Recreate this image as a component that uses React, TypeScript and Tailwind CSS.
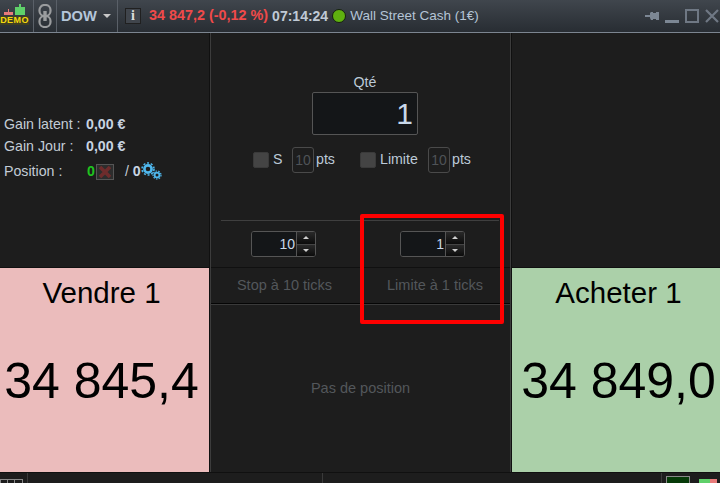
const font = "font-['Liberation_Sans',Arial,sans-serif]";

function Sep() {
  return <div className="h-full w-px bg-[#5a6068]" />;
}

function DemoIcon() {
  return (
    <div className="relative h-8 w-[33px] shrink-0">
      <svg width="33" height="32" viewBox="0 0 33 32" className="absolute left-0 top-0">
        <rect x="4" y="12" width="9" height="3" fill="#e87b7b" />
        <rect x="8" y="9" width="1" height="3" fill="#e87b7b" />
        <rect x="15" y="7" width="10" height="8" fill="#5fd06a" />
        <rect x="19" y="4" width="2" height="3" fill="#5fd06a" />
      </svg>
      <span className="absolute left-0 top-[16px] w-[29px] bg-[#3f3f25] text-center text-[9px] font-bold leading-[9px] tracking-[0.4px] text-[#f5d90a]">
        DEMO
      </span>
    </div>
  );
}

function ChainIcon() {
  return (
    <svg width="14" height="24" viewBox="0 0 14 24" fill="none" stroke="#9a9c9e" strokeWidth="2.2">
      <rect x="1.5" y="1" width="11" height="11" rx="5" />
      <rect x="1.5" y="12" width="11" height="11" rx="5" />
      <path d="M7 7v10" strokeWidth="3.4" />
    </svg>
  );
}

function WindowButtons() {
  return (
    <div className="ml-auto mr-[1px] flex items-center gap-[6px]">
      <svg width="14" height="12" viewBox="0 0 14 12" fill="#7c8794">
        <path d="M0 5h5V3l1-1h2v1h3V2h3v8h-3V9H8v1H6L5 8V7H0z" />
      </svg>
      <svg width="14" height="14" viewBox="0 0 14 14" fill="#7c8794">
        <rect x="0" y="11" width="14" height="3" />
      </svg>
      <svg width="14" height="14" viewBox="0 0 14 14" fill="none" stroke="#6f7884" strokeWidth="2">
        <rect x="1" y="1" width="12" height="12" />
      </svg>
      <svg width="14" height="14" viewBox="0 0 14 14" fill="none" stroke="#6f7884" strokeWidth="2.2">
        <path d="M1 1l12 12M13 1L1 13" />
      </svg>
    </div>
  );
}

function Header() {
  return (
    <div className="flex h-[33px] items-center border-b border-[#7c8590] bg-gradient-to-b from-[#40464d] to-[#282d33] text-[14px]">
      <DemoIcon />
      <Sep />
      <div className="flex w-[22px] justify-center">
        <ChainIcon />
      </div>
      <Sep />
      <span className="ml-[4px] text-[14.7px] font-bold text-[#b4c6da]">DOW</span>
      <span className="ml-[6px] h-0 w-0 border-x-[4px] border-t-[4px] border-x-transparent border-t-[#c8c8c8]" />
      <div className="ml-[6px] h-full w-px bg-[#5a6068]" />
      <span className="ml-[7px] flex h-[16px] w-[16px] items-center justify-center border border-[#202020] bg-[#40454c] font-['Liberation_Serif',serif] text-[14px] font-bold leading-none text-[#dddddd]">
        i
      </span>
      <span className="ml-[8px] text-[14.4px] font-bold text-[#f04a4a]">34 847,2 (-0,12 %)</span>
      <span className="ml-[4px] font-bold text-[#c0cad6]">07:14:24</span>
      <span className="ml-[4px] h-[14px] w-[14px] rounded-full border border-[#15200f] bg-[#5fb00f]" />
      <span className="ml-[4px] text-[13.5px] text-[#b4c4d6]">Wall Street Cash (1€)</span>
      <WindowButtons />
    </div>
  );
}

function LeftInfo() {
  return (
    <div className="flex h-[234px] flex-col bg-[#1d1d1d] pl-[4px] pt-[81px] text-[14.2px] text-[#c3ccd6]">
      <div className="flex h-[22px] items-center">
        <span className="w-[82px]">Gain latent :</span>
        <span className="font-bold text-[#c8d4e2]">0,00 €</span>
      </div>
      <div className="flex h-[22px] items-center">
        <span className="w-[82px]">Gain Jour :</span>
        <span className="font-bold text-[#c8d4e2]">0,00 €</span>
      </div>
      <div className="mt-[3px] flex h-[22px] items-center">
        <span className="w-[83px]">Position :</span>
        <span className="font-bold text-[#1fc41f]">0</span>
        <span className="ml-px flex h-[16px] w-[18px] items-center justify-center border border-[#555] bg-[#2d2d2d]">
          <svg width="12" height="12" viewBox="0 0 12 12" stroke="#6e2c2c" strokeWidth="3.6">
            <path d="M1 1l10 10M11 1L1 11" />
          </svg>
        </span>
        <span className="ml-[11px]">/</span>
        <span className="ml-[4px] font-bold text-[#c8d4e2]">0</span>
        <svg width="22" height="20" viewBox="0 0 22 20" fill="none" stroke="#4fb8ee" className="-mt-[1px]">
          <circle cx="7" cy="7" r="3.6" strokeWidth="2.6" />
          <circle cx="7" cy="7" r="6" strokeWidth="1.6" strokeDasharray="2 1.8" />
          <circle cx="16" cy="13" r="2.4" strokeWidth="1.8" />
          <circle cx="16" cy="13" r="4" strokeWidth="1.2" strokeDasharray="1.6 1.2" />
        </svg>
      </div>
    </div>
  );
}

function Checkbox() {
  return <span className="h-4 w-4 rounded-[2px] border border-[#3a3a3a] bg-[#444444]" />;
}

function PtsBox() {
  return (
    <span className="flex h-[26px] w-[22px] items-center justify-center rounded-[3px] border border-[#4a4a4a] text-[14px] text-[#4f5357]">
      10
    </span>
  );
}

function Spinner({ value }: { value: string }) {
  return (
    <div className="flex h-[26px] w-[65px] overflow-hidden rounded-[3px] border border-[#555555]">
      <div className="flex-1 bg-[#141618] pr-[1px] text-right text-[14px] leading-[24px] text-[#c8d8ea]">{value}</div>
      <div className="flex w-[19px] flex-col border-l border-[#555555] bg-[#101010]">
        <div className="flex flex-1 items-center justify-center border-b border-[#444444] bg-gradient-to-b from-[#2a2a2a] to-[#0c0c0c]">
          <span className="h-0 w-0 border-x-[3px] border-b-[3px] border-x-transparent border-b-[#d0d0d0]" />
        </div>
        <div className="flex flex-1 items-center justify-center bg-gradient-to-b from-[#2a2a2a] to-[#0c0c0c]">
          <span className="h-0 w-0 border-x-[3px] border-t-[3px] border-x-transparent border-t-[#d0d0d0]" />
        </div>
      </div>
    </div>
  );
}

function CenterTop() {
  return (
    <div className="flex h-[234px] flex-col bg-[#1d1d1d] text-[14.2px] text-[#bccad8]">
      <div className="ml-[101px] mt-[40px] w-[106px] text-center leading-[18px]">Qté</div>
      <div className="ml-[101px] mt-px h-[43px] w-[106px] rounded-[2px] border border-[#555555] bg-[#141618] pr-[4px] text-right text-[30px] leading-[41px] text-[#c8d8ea]">
        1
      </div>
      <div className="mt-[12px] flex items-center pl-[42px]">
        <Checkbox />
        <span className="ml-[4px] w-[19px]">S</span>
        <PtsBox />
        <span className="ml-[2px] w-[44px]">pts</span>
        <Checkbox />
        <span className="ml-[4px] w-[48px]">Limite</span>
        <PtsBox />
        <span className="ml-[2px]">pts</span>
      </div>
      <div className="ml-[10px] mr-[11px] mt-[47px] h-px bg-[#3f3f3f]" />
      <div className="mt-[10px] flex pl-[40px]">
        <Spinner value="10" />
        <div className="ml-[84px]">
          <Spinner value="1" />
        </div>
      </div>
    </div>
  );
}

function PriceBox({ title, price, colour }: { title: string; price: string; colour: string }) {
  return (
    <div className={`flex h-[204px] flex-col items-center text-black ${colour}`}>
      <div className="mt-[7px] text-[29.5px] leading-[36px]">{title}</div>
      <div className="mt-[43px] text-[50px] leading-[54px]">{price}</div>
    </div>
  );
}

function CenterBottom() {
  return (
    <div className="flex h-[204px] flex-col bg-[#1d1d1d] text-[14.5px] text-[#53575b]">
      <div className="flex h-[35px] items-center">
        <span className="w-[147px] text-center">Stop à 10 ticks</span>
        <span className="ml-[4px] w-[146px] text-center">Limite à 1 ticks</span>
      </div>
      <div className="h-[2px] border-t border-[#050505] bg-[#3a3a3a]" />
      <div className="flex flex-1 items-center justify-center pt-px">Pas de position</div>
    </div>
  );
}

export default function App() {
  return (
    <div className={`relative h-[483px] w-[720px] overflow-hidden bg-[#101010] ${font}`}>
      <Header />
      <div className="grid grid-cols-[209px_301px_208px] gap-x-px">
        <div className="flex flex-col gap-y-px">
          <LeftInfo />
          <PriceBox title="Vendre 1" price="34 845,4" colour="bg-[#ebbcbc] pr-[6px]" />
        </div>
        <div className="flex flex-col gap-y-px border-x border-[#3c3c3c]">
          <CenterTop />
          <CenterBottom />
        </div>
        <div className="flex flex-col gap-y-px">
          <div className="h-[234px] bg-[#1d1d1d]" />
          <PriceBox title="Acheter 1" price="34 849,0" colour="bg-[#abd0a9] pl-[5px]" />
        </div>
      </div>
      <div className="mt-px flex h-[10px] bg-[#1d1d1d]">
        <div className="flex h-full w-[28px] items-start border-r border-[#3a3a3a] pt-[6px]">
          <div className="grid h-[4px] w-[23px] grid-cols-3 border-x border-t border-[#888888]">
            <span className="border-r border-[#888888]" />
            <span className="border-r border-[#888888]" />
            <span />
          </div>
        </div>
        <div className="ml-[294px] h-full w-px bg-[#3a3a3a]" />
        <div className="ml-[338px] h-full w-px bg-[#3a3a3a]" />
        <div className="ml-[4px] mt-[3px] h-[7px] w-[24px] border border-b-0 border-[#888888] bg-[#063a08]" />
        <div className="ml-[9px] mt-[6px] flex h-[4px] w-[18px]">
          <span className="w-[11px] bg-[#5fd06a]" />
          <span className="flex-1 bg-[#e87b7b]" />
        </div>
      </div>
      <div className="absolute left-[360px] top-[214px] h-[110px] w-[144px] rounded-[2px] border-[4px] border-[#fe0000]" />
    </div>
  );
}
